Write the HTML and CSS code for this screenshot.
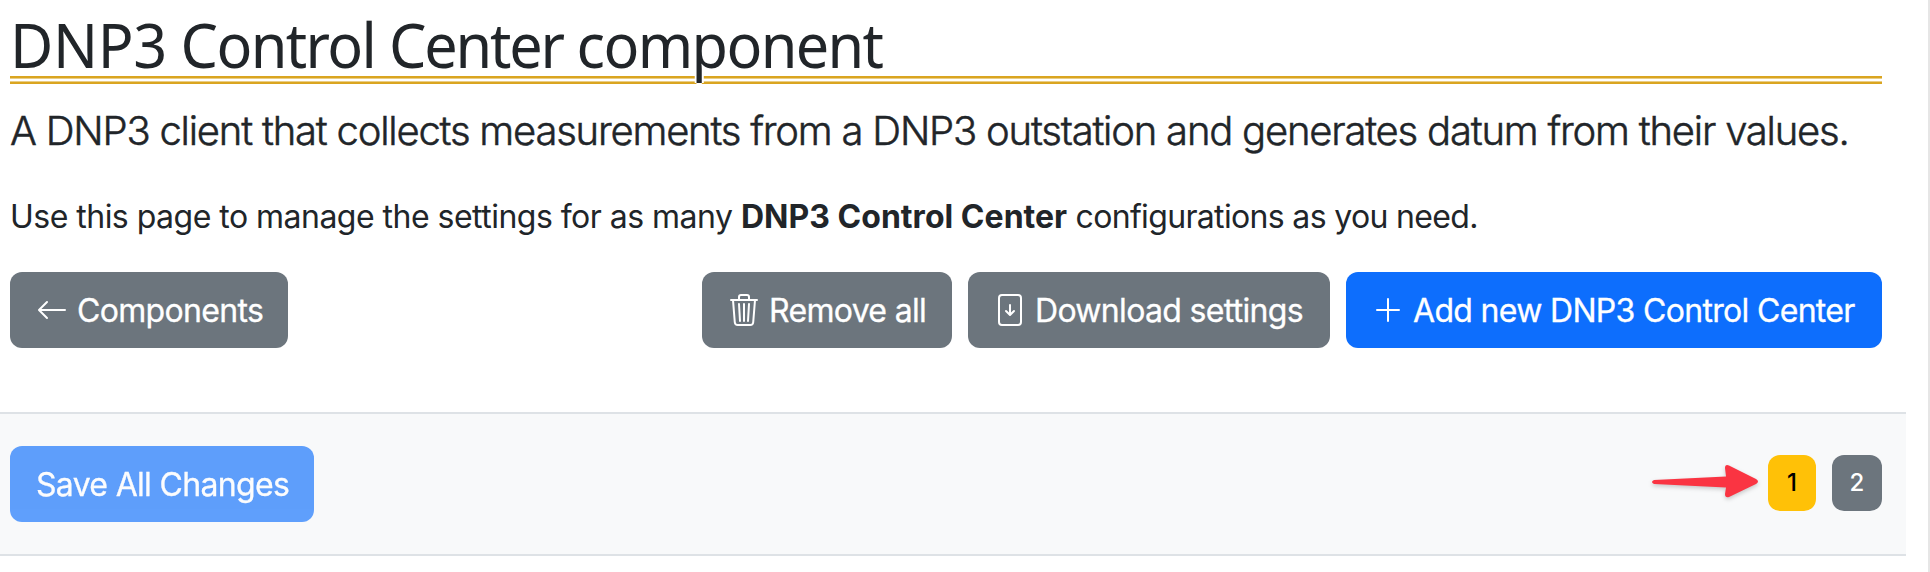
FILE: index.html
```html
<!DOCTYPE html>
<html lang="en">
<head>
<meta charset="utf-8">
<title>DNP3 Control Center component</title>
<link rel="stylesheet" href="styles.css">
</head>
<body>
<main class="page">
  <header class="intro">
    <h1 class="title"><span class="title-text"><span class="title-acronym">DNP3</span> Control <span class="title-center">Center</span> component</span></h1>
    <p class="lead">A DNP3 client that collects measurements from a DNP3 outstation and generates datum from their values.</p>
    <p class="help">Use this page to manage the settings for as many <strong>DNP3 Control Center</strong><span class="help-end"> configurations as you need.</span></p>
    <div class="actions">
      <button class="btn btn-secondary btn-back">
        <svg class="icon" viewBox="0 0 16 16"><path fill-rule="evenodd" d="M15 8a.5.5 0 0 0-.5-.5H2.707l3.147-3.146a.5.5 0 1 0-.708-.708l-4 4a.5.5 0 0 0 0 .708l4 4a.5.5 0 0 0 .708-.708L2.707 8.5H14.5A.5.5 0 0 0 15 8"/></svg>
        <span class="label">Components</span>
      </button>
      <button class="btn btn-secondary btn-remove">
        <svg class="icon" viewBox="0 0 16 16"><path d="M6.5 1h3a.5.5 0 0 1 .5.5v1H6v-1a.5.5 0 0 1 .5-.5M11 2.5v-1A1.5 1.5 0 0 0 9.5 0h-3A1.5 1.5 0 0 0 5 1.5v1H1.5a.5.5 0 0 0 0 1h.538l.853 10.66A2 2 0 0 0 4.885 16h6.23a2 2 0 0 0 1.994-1.84l.853-10.66h.538a.5.5 0 0 0 0-1zm1.958 1-.846 10.58a1 1 0 0 1-.997.92h-6.23a1 1 0 0 1-.997-.92L3.042 3.5zm-7.487 1a.5.5 0 0 1 .528.47l.5 8.5a.5.5 0 0 1-.998.06L5 5.03a.5.5 0 0 1 .47-.53zm5.058 0a.5.5 0 0 1 .47.53l-.5 8.5a.5.5 0 1 1-.998-.06l.5-8.5a.5.5 0 0 1 .528-.47M8 4.5a.5.5 0 0 1 .5.5v8.5a.5.5 0 0 1-1 0V5a.5.5 0 0 1 .5-.5"/></svg>
        <span class="label">Remove all</span>
      </button>
      <button class="btn btn-secondary btn-download">
        <svg class="icon" viewBox="0 0 16 16"><path d="M8 5a.5.5 0 0 1 .5.5v3.793l1.146-1.147a.5.5 0 0 1 .708.708l-2 2a.5.5 0 0 1-.708 0l-2-2a.5.5 0 1 1 .708-.708L7.5 9.293V5.5A.5.5 0 0 1 8 5"/><path d="M4 0a2 2 0 0 0-2 2v12a2 2 0 0 0 2 2h8a2 2 0 0 0 2-2V2a2 2 0 0 0-2-2zm0 1h8a1 1 0 0 1 1 1v12a1 1 0 0 1-1 1H4a1 1 0 0 1-1-1V2a1 1 0 0 1 1-1"/></svg>
        <span class="label">Download settings</span>
      </button>
      <button class="btn btn-primary btn-add">
        <svg class="icon" viewBox="0 0 16 16"><path d="M8 2a.5.5 0 0 1 .5.5v5h5a.5.5 0 0 1 0 1h-5v5a.5.5 0 0 1-1 0v-5h-5a.5.5 0 0 1 0-1h5v-5A.5.5 0 0 1 8 2"/></svg>
        <span class="label">Add new DNP3 Control Center</span>
      </button>
    </div>
  </header>
  <section class="savebar">
    <button class="btn btn-primary btn-save" disabled><span class="label">Save All Changes</span></button>
    <nav class="pager">
      <svg class="pointer" viewBox="0 0 116 44"><path d="M7 20 L79 16.5 L78 8 Q78 4 82 5.5 L109 19 Q113 21.5 109 24 L82 37 Q78 38 78 34 L79 27.5 L7 24 Q3 22 7 20Z"/></svg>
      <a class="badge badge-current">1</a>
      <a class="badge badge-other">2</a>
    </nav>
  </section>
</main>
</body>
</html>
```
FILE: styles.css
```css
* { box-sizing: border-box; }
body {
  margin: 0;
  background: #fff;
  color: #212529;
  font: 400 32px/48px Inter, "Liberation Sans", sans-serif;
}
.page {
  height: 572px;
  overflow: hidden;
  border-right: 2px solid #e6e6e6;
}
.intro { padding: 0 46px 0 10px; }
.title {
  margin: 0;
  height: 84px;
  padding-top: 7px;
  font: 400 62px/74px "Noto Sans", "Open Sans", sans-serif;
  white-space: nowrap;
  background: linear-gradient(#daa520 0 2px, #e9cd86 2px 3px, #fff 3px 5px, #e9cd86 5px 6px, #daa520 6px 8px) 0 76px / 100% 8px no-repeat;
}
.title-text {
  display: inline-block;
  letter-spacing: -1.7px;
  transform: scaleX(.957);
  transform-origin: 0 0;
  text-shadow: 2px 0 #fff, -2px 0 #fff, 0 2px #fff, 0 -2px #fff;
}
.title-acronym { letter-spacing: -.4px; }
.title-center { letter-spacing: -2.3px; }
.lead {
  margin: 17px 0 0;
  font-size: 40px;
  line-height: 60px;
  font-weight: 350;
  letter-spacing: -1.21px;
  -webkit-text-stroke: .5px currentColor;
  white-space: nowrap;
}
.help {
  margin: 32px 0 0;
  letter-spacing: -.52px;
  white-space: nowrap;
}
.help strong {
  font-weight: 700;
  letter-spacing: .03px;
}
.help-end { letter-spacing: -.66px; }
.actions {
  display: flex;
  gap: 16px;
  margin-top: 31px;
}
.btn {
  display: flex;
  align-items: center;
  gap: 9px;
  height: 76px;
  padding: 1px 0 0 26px;
  border: 0;
  border-radius: 12px;
  color: #fff;
  font: inherit;
  letter-spacing: -.68px;
  -webkit-text-stroke: .3px currentColor;
  white-space: nowrap;
}
.btn-secondary { background: #6c757d; }
.btn-primary { background: #0d6efd; }
.btn-back { width: 278px; margin-right: auto; }
.btn-remove { width: 250px; }
.btn-download { width: 362px; }
.btn-add { width: 536px; }
.btn-save { width: 304px; opacity: .65; }
.icon {
  width: 32px;
  height: 32px;
  flex: none;
  margin-top: -1px;
  fill: currentColor;
}
.label { padding-top: 1px; }
.savebar {
  display: flex;
  align-items: center;
  justify-content: space-between;
  width: 1906px;
  height: 144px;
  margin-top: 64px;
  padding: 0 24px 0 10px;
  background: #f8f9fa;
  border-top: 2px solid #dee2e6;
  border-bottom: 2px solid #dee2e6;
}
.pager {
  display: flex;
  align-items: center;
  margin-top: -2px;
}
.pointer {
  width: 116px;
  height: 44px;
  margin: -3px 5px 0 0;
  fill: #fa3442;
  filter: drop-shadow(0 2px 2px rgba(0, 0, 0, .2));
}
.badge {
  height: 56px;
  border-radius: 12px;
  font-size: 24px;
  line-height: 56px;
  font-weight: 500;
  text-align: center;
}
.badge-current { width: 48px; margin-right: 16px; background: #ffc107; color: #000; }
.badge-other { width: 50px; background: #6c757d; color: #fff; }
```
